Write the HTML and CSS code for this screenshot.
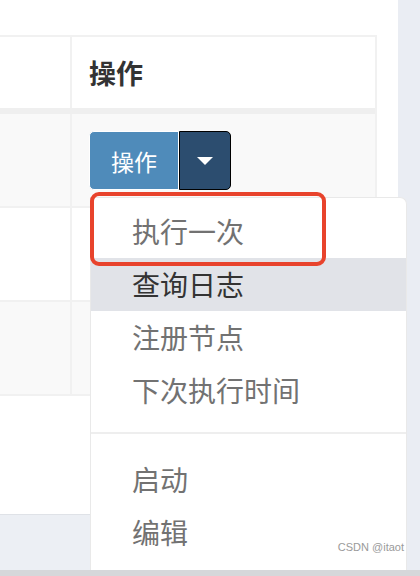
FILE: index.html
```html
<!DOCTYPE html>
<html lang="zh-CN">
<head>
  <meta charset="UTF-8" />
  <title>任务列表</title>
  <link rel="stylesheet" href="styles.css">
</head>
<body>
  <div class="main">

    <!-- Content panel -->
    <div class="panel">
      <div class="job-table">
        <div class="row head">
          <div class="cell col-left"></div>
          <div class="cell col-ops">操作</div>
        </div>

        <div class="row striped">
          <div class="cell col-left"></div>
          <div class="cell col-ops">
            <div class="btn-group">
              <button class="btn-main">操作</button>
              <button class="btn-caret"><span class="caret"></span></button>

              <!-- Dropdown -->
              <ul class="dropdown">
                <li>执行一次</li>
                <li class="active">查询日志</li>
                <li>注册节点</li>
                <li>下次执行时间</li>
                <li class="divider"></li>
                <li>启动</li>
                <li>编辑</li>
              </ul>
              <div class="highlight-box"></div>
            </div>
          </div>
        </div>

        <div class="row">
          <div class="cell col-left"></div>
          <div class="cell col-ops"></div>
        </div>

        <div class="row striped">
          <div class="cell col-left"></div>
          <div class="cell col-ops"></div>
        </div>
      </div>
    </div>

    <div class="side"></div>

    <div class="watermark">CSDN @itaot</div>
  </div>
  <div class="bottom-bar"></div>
</body>
</html>
```

FILE: styles.css
```css
body {
  margin: 0;
  padding: 0;
  font-family: "Noto Sans CJK SC", "Noto Sans", sans-serif;
  background-color: #eceff4;
}

.main {
  height: 570px;
  display: flex;
  align-items: flex-start;
  position: relative;
  overflow: hidden;
}

.panel {
  width: 398px;
  height: 515px;
  background-color: #fff;
  padding-top: 35px;
  box-sizing: border-box;
  border-bottom: 1px solid #dfe2e7;
}

.side {
  flex: 1;
  height: 100%;
  background-color: #eaedf3;
}

.bottom-bar {
  height: 6px;
  background-color: #d6d7da;
}

/* Table */
.job-table {
  width: 377px;
  border-top: 2px solid #f1f1f1;
  border-right: 2px solid #f1f1f1;
  box-sizing: border-box;
}

.row {
  display: flex;
  height: 94px;
  border-bottom: 2px solid #f1f1f1;
  box-sizing: border-box;
}

.row.head {
  height: 77px;
  border-bottom: 6px solid #efefef;
}

.row.striped {
  background-color: #f9f9f9;
}

.cell {
  box-sizing: border-box;
}

.col-left {
  width: 72px;
  border-right: 2px solid #f1f1f1;
}

.col-ops {
  flex: 1;
  padding: 17px 0 0 17px;
}

.head .col-ops {
  padding: 0 0 0 17px;
  display: flex;
  align-items: center;
  font-size: 27px;
  font-weight: bold;
  color: #333;
}

/* Button group */
.btn-group {
  display: flex;
  position: relative;
  width: max-content;
}

.btn-group button {
  height: 59px;
  border: 1px solid;
  margin: 0;
  font-family: inherit;
  cursor: pointer;
}

.btn-main {
  width: 90px;
  background-color: #4f8bba;
  border-color: #4a85b3;
  color: #fff;
  font-size: 23px;
  border-radius: 5px 0 0 5px;
}

.btn-caret {
  width: 52px;
  background-color: #2c4d6f;
  border-color: #1a2d42;
  border-radius: 0 5px 5px 0;
  display: flex;
  justify-content: center;
  align-items: center;
}

.caret {
  width: 0;
  height: 0;
  border-top: 8px solid #fff;
  border-left: 8px solid transparent;
  border-right: 8px solid transparent;
}

/* Dropdown menu */
.dropdown {
  position: absolute;
  top: 66px;
  left: 1px;
  width: 317px;
  height: 420px;
  margin: 0;
  padding: 7px 0 0;
  list-style: none;
  background-color: #fff;
  border: 1px solid #e9e9e9;
  border-bottom: none;
  border-radius: 0 7px 0 0;
  box-sizing: border-box;
  z-index: 2;
}

.dropdown li {
  height: 53px;
  line-height: 53px;
  padding-left: 41px;
  font-size: 28px;
  color: #727272;
}

.dropdown li.active {
  background-color: #e1e3e8;
  color: #333;
}

.dropdown li.divider {
  height: 2px;
  margin: 15px 0 19px;
  padding: 0;
  background-color: #eeeeee;
}

/* Red annotation box */
.highlight-box {
  position: absolute;
  top: 61px;
  left: 1px;
  width: 236px;
  height: 74px;
  border: 4px solid #e8432c;
  border-radius: 9px;
  box-sizing: border-box;
  z-index: 3;
}

.watermark {
  position: absolute;
  right: 16px;
  bottom: 17px;
  font-family: "Liberation Sans", Arial, sans-serif;
  font-size: 11px;
  color: #9a9a9a;
  z-index: 4;
}
```
